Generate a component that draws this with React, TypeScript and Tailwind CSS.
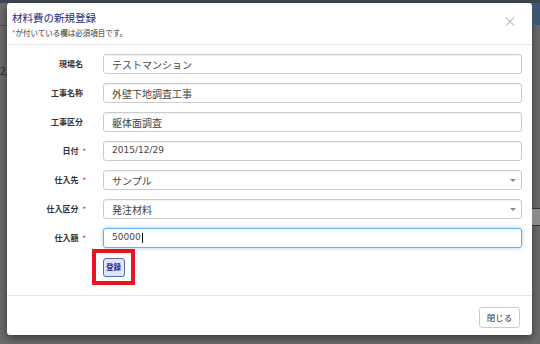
const font = { fontFamily: '"Noto Sans CJK JP", "Liberation Sans", sans-serif' };

interface Field {
    label: string;
    value: string;
    required?: boolean;
    kind?: 'text' | 'select' | 'focus';
    mono?: boolean;
}

const fields: Field[] = [
    { label: '現場名', value: 'テストマンション' },
    { label: '工事名称', value: '外壁下地調査工事' },
    { label: '工事区分', value: '躯体面調査' },
    { label: '日付', value: '2015/12/29', required: true, mono: true },
    { label: '仕入先', value: 'サンプル', required: true, kind: 'select' },
    { label: '仕入区分', value: '発注材料', required: true, kind: 'select' },
    { label: '仕入額', value: '50000', required: true, kind: 'focus', mono: true },
];

function FieldRow({ field }: { field: Field }) {
    const focus = field.kind === 'focus';
    return (
        <div className="flex items-center h-[20px]">
            <div className="w-[79px] flex justify-end items-center text-[8px] font-bold text-[#333]">
                {field.label}
                {field.required ? <span className="text-[#d9534f] ml-[4px] text-[7px]">*</span> : <span className="w-[3px]" />}
            </div>
            <div
                className={
                    'ml-[17px] w-[419px] h-[20px] rounded-[3px] bg-white flex items-center pl-[8px] pr-[5px] ' +
                    (focus
                        ? 'border border-[#66afe9] shadow-[0_0_4px_rgba(102,175,233,0.6)]'
                        : 'border border-[#ccc] shadow-[inset_0_1px_1px_rgba(0,0,0,0.06)]')
                }
            >
                <span
                    className={'flex-1 text-[#444] ' + (field.mono ? 'text-[9px]' : 'text-[10px]')}
                    style={field.mono ? { fontFamily: '"DejaVu Sans", sans-serif' } : undefined}
                >
                    {field.value}
                    {focus && <span className="inline-block w-px h-[10px] bg-black align-middle ml-px" />}
                </span>
                {field.kind === 'select' && (
                    <span className="w-0 h-0 border-l-[3px] border-r-[3px] border-t-[3px] border-l-transparent border-r-transparent border-t-[#888]" />
                )}
            </div>
        </div>
    );
}

export default function App() {
    return (
        <div className="w-[540px] h-[344px] bg-[#6b6b6b] relative overflow-hidden" style={font}>
            <div className="h-[3px] bg-[#3e4650]" />
            <div className="flex">
                <div className="w-[7px] flex flex-col text-[9px] text-[#1c2a40]">
                    <div className="h-[22px]" />
                    <div className="h-px bg-[#4b4b4b]" />
                    <div className="mt-[40px] text-[10px] leading-none">2/</div>
                </div>
                <div className="w-[525px] h-[332px] bg-white rounded-[3px] shadow-[0_3px_9px_rgba(0,0,0,0.5)] flex flex-col">
                    <div className="h-[42px] border-b border-[#e5e5e5] px-[5px] pt-[9px] flex">
                        <div className="flex-1">
                            <div className="text-[10.5px] text-[#1d2a8a] leading-[12px]">材料費の新規登録</div>
                            <div className="text-[7.5px] text-[#333] leading-[10px] mt-[4px]">
                                <span className="text-[#d9534f]">*</span>が付いている欄は必須項目です。
                            </div>
                        </div>
                        <div className="text-[14px] text-[#c0c0c0] leading-none mr-[10px] mt-[1px]">×</div>
                    </div>
                    <div className="flex flex-col gap-[9px] pt-[9px]">
                        {fields.map((f) => (
                            <FieldRow key={f.label} field={f} />
                        ))}
                    </div>
                    <div className="h-[47px] flex items-start">
                        <div className="ml-[85px] mt-[1px] border-[4px] border-[#e8141e] w-[43px] h-[36px] flex items-center justify-center">
                            <div className="w-[22px] h-[19px] rounded-[3px] border border-[#5a6aa8] bg-[#dce6fb] flex items-center justify-center text-[7.5px] font-bold text-[#1d2a8a]">
                                登録
                            </div>
                        </div>
                    </div>
                    <div className="border-t border-[#e5e5e5] flex-1 flex justify-end items-start pt-[11px] pr-[12px]">
                        <div className="w-[41px] h-[21px] rounded-[3px] border border-[#ccc] bg-white flex items-center justify-center text-[8.5px] text-[#333]">
                            閉じる
                        </div>
                    </div>
                </div>
                <div className="flex-1 flex flex-col">
                    <div className="h-[22px] bg-[#3f5670]" />
                    <div className="mt-[183px] h-[18px] bg-[#8a8a8a] border-y border-[#333]" />
                </div>
            </div>
        </div>
    );
}
